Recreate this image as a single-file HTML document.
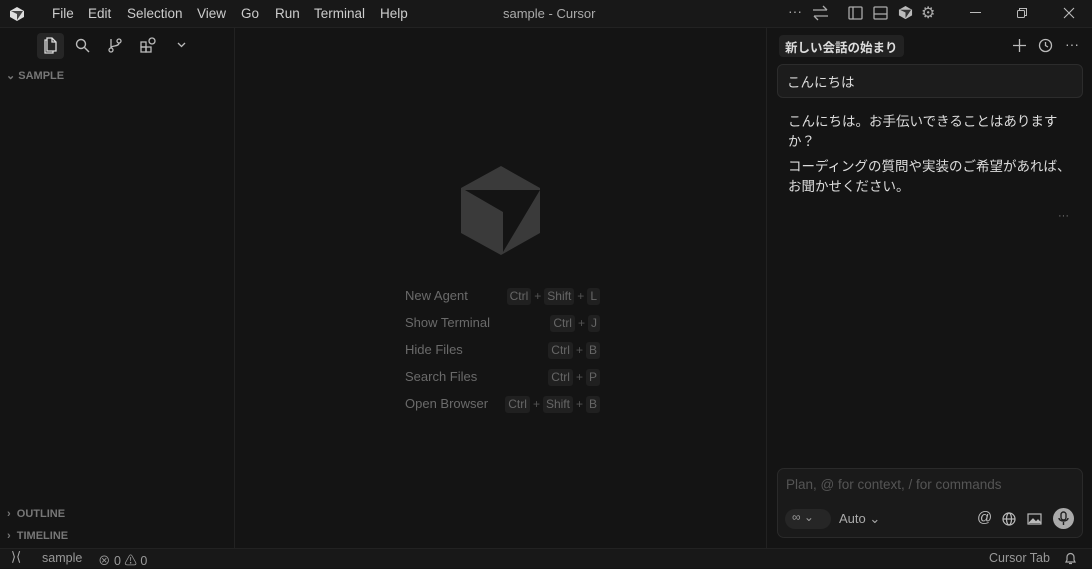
<!DOCTYPE html>
<html><head><meta charset="utf-8"><style>
*{margin:0;padding:0;box-sizing:border-box}
body{width:1092px;height:568px;background:#141414;font-family:"Liberation Sans","Noto Sans CJK JP",sans-serif;color:#ccc;position:relative;overflow:hidden;font-size:13px}
.a{position:absolute;white-space:nowrap}
.kb{display:inline-block;background:#202020;border-radius:3px;padding:1px 3px;font-size:12px;color:#666;line-height:15px}
.row{position:absolute;left:405px;width:195px;height:20px;color:#6a6a6a;font-size:13px}
.row .k{position:absolute;right:0;top:0;color:#555;font-size:12px}
.row .k span.p{margin:0 3px}
svg{position:absolute}
</style></head><body>
<div class="a" style="left:0;top:0;width:1092px;height:28px;background:#181818;border-bottom:1px solid #222"></div>
<svg style="left:9px;top:6px" width="16" height="16" viewBox="0 0 16 16"><path d="M8 1L15 5V11L8 15L1 11V5Z" fill="#ddd"/><path d="M2 5H14L8 14V8Z" fill="#444"/></svg>
<div class="a" style="top:6px;left:52px;font-size:13.5px">File</div>
<div class="a" style="top:6px;left:88px;font-size:13.5px">Edit</div>
<div class="a" style="top:6px;left:127px;font-size:13.5px">Selection</div>
<div class="a" style="top:6px;left:197px;font-size:13.5px">View</div>
<div class="a" style="top:6px;left:241px;font-size:13.5px">Go</div>
<div class="a" style="top:6px;left:275px;font-size:13.5px">Run</div>
<div class="a" style="top:6px;left:314px;font-size:13.5px">Terminal</div>
<div class="a" style="top:6px;left:380px;font-size:13.5px">Help</div>
<div class="a" style="top:6px;left:503px;font-size:13px;color:#aaa">sample - Cursor</div>
<div class="a" style="top:3px;left:788px;font-size:14px;color:#aaa">···</div>
<svg style="left:812px;top:5px" width="17" height="16" viewBox="0 0 17 16" fill="none" stroke="#aaa" stroke-width="1.3"><path d="M1 5H15M11 1L15 5M16 11H2M6 15L2 11"/></svg>
<svg style="left:848px;top:6px" width="15" height="14" fill="none" stroke="#aaa" stroke-width="1.3"><rect x="1" y="1" width="13" height="12" rx="1"/><path d="M5 1V13"/></svg>
<svg style="left:873px;top:6px" width="15" height="14" fill="none" stroke="#aaa" stroke-width="1.3"><rect x="1" y="1" width="13" height="12" rx="1"/><path d="M1 8H14"/></svg>
<svg style="left:898px;top:5px" width="15" height="15" viewBox="0 0 16 16"><path d="M8 1L15 5V11L8 15L1 11V5Z" fill="#bbb"/><path d="M2 5H14L8 14V8Z" fill="#333"/></svg>
<div class="a" style="top:3px;left:921px;font-size:16px;color:#aaa">⚙</div>
<div class="a" style="top:12px;left:970px;width:11px;height:1px;background:#bbb"></div>
<svg style="left:1016px;top:7px" width="12" height="12" fill="none" stroke="#bbb"><rect x="1.5" y="3.5" width="7" height="7" rx="1"/><path d="M3.5 3.5V1.5H10.5V8.5H8.5"/></svg>
<svg style="left:1063px;top:7px" width="12" height="12" stroke="#bbb" stroke-width="1.1"><path d="M1 1L11 11M11 1L1 11"/></svg>
<div class="a" style="left:234px;top:28px;width:1px;height:520px;background:#222"></div>
<div class="a" style="left:37px;top:33px;width:27px;height:26px;background:#262626;border-radius:4px"></div>
<svg style="left:42px;top:37px" width="16" height="18" fill="none" stroke="#ddd" stroke-width="1.3"><path d="M5 3H3V16H11V14"/><path d="M5 1H10L14 5V14H5Z"/><path d="M10 1V5H14"/></svg>
<svg style="left:75px;top:38px" width="15" height="15" fill="none" stroke="#bbb" stroke-width="1.4"><circle cx="6" cy="6" r="4.5"/><path d="M9.5 9.5L14 14"/></svg>
<svg style="left:107px;top:37px" width="17" height="17" fill="none" stroke="#bbb" stroke-width="1.3"><circle cx="4" cy="13" r="2"/><circle cx="12" cy="4" r="2"/><path d="M4 11V2M12 6C12 10 4 8 4 11"/></svg>
<svg style="left:140px;top:37px" width="17" height="17" fill="none" stroke="#bbb" stroke-width="1.3"><rect x="1" y="5" width="5" height="5"/><rect x="1" y="10" width="5" height="5"/><rect x="6" y="10" width="5" height="5"/><circle cx="12" cy="4" r="3"/></svg>
<svg style="left:177px;top:42px" width="9" height="6" fill="none" stroke="#bbb" stroke-width="1.3"><path d="M1 1L4.5 4.5L8 1"/></svg>
<div class="a" style="left:6px;top:69px;font-size:11px;font-weight:bold;color:#777">⌄&nbsp;SAMPLE</div>
<div class="a" style="left:7px;top:508px;font-size:11px;font-weight:bold;color:#777">›&nbsp; OUTLINE</div>
<div class="a" style="left:7px;top:530px;font-size:11px;font-weight:bold;color:#777">›&nbsp; TIMELINE</div>
<svg style="left:461px;top:166px" width="80" height="90" viewBox="461 166 80 90"><path d="M501 166L540 188V233L501 255L461 233V188Z" fill="#3a3a3a"/><path d="M465 190H540L503 252V212Z" fill="#141414"/></svg>
<div class="row" style="top:288px">New Agent<div class="k"><span class="kb">Ctrl</span><span class="p">+</span><span class="kb">Shift</span><span class="p">+</span><span class="kb">L</span></div></div>
<div class="row" style="top:315px">Show Terminal<div class="k"><span class="kb">Ctrl</span><span class="p">+</span><span class="kb">J</span></div></div>
<div class="row" style="top:342px">Hide Files<div class="k"><span class="kb">Ctrl</span><span class="p">+</span><span class="kb">B</span></div></div>
<div class="row" style="top:369px">Search Files<div class="k"><span class="kb">Ctrl</span><span class="p">+</span><span class="kb">P</span></div></div>
<div class="row" style="top:396px">Open Browser<div class="k"><span class="kb">Ctrl</span><span class="p">+</span><span class="kb">Shift</span><span class="p">+</span><span class="kb">B</span></div></div>
<div class="a" style="left:766px;top:28px;width:1px;height:520px;background:#222"></div>
<div class="a" style="left:779px;top:35px;height:22px;padding:2px 6px;background:#222;border-radius:4px;font-size:12.5px;font-weight:bold;color:#ddd">新しい会話の始まり</div>
<svg style="left:1013px;top:39px" width="13" height="13" stroke="#bbb" stroke-width="1.3"><path d="M6.5 0V13M0 6.5H13"/></svg>
<svg style="left:1038px;top:38px" width="15" height="15" fill="none" stroke="#bbb" stroke-width="1.3"><circle cx="7.5" cy="7.5" r="6"/><path d="M7.5 4V7.5L10 9"/></svg>
<div class="a" style="left:1065px;top:36px;font-size:14px;color:#bbb">···</div>
<div class="a" style="left:777px;top:64px;width:306px;height:34px;background:#1c1c1c;border:1px solid #2c2c2c;border-radius:6px;padding:6px 9px;font-size:13.5px;color:#ddd">こんにちは</div>
<div class="a" style="left:788px;top:112px;font-size:13.5px;color:#ddd;line-height:20px;white-space:normal;width:280px">こんにちは。お手伝いできることはありますか？</div>
<div class="a" style="left:788px;top:157px;font-size:13.5px;color:#ddd;line-height:20px;white-space:normal;width:285px">コーディングの質問や実装のご希望があれば、お聞かせください。</div>
<div class="a" style="left:1058px;top:210px;font-size:11px;color:#777">···</div>
<div class="a" style="left:777px;top:468px;width:306px;height:70px;background:#1a1a1a;border:1px solid #2a2a2a;border-radius:7px"></div>
<div class="a" style="left:786px;top:477px;font-size:13.5px;color:#555">Plan, @ for context, / for commands</div>
<div class="a" style="left:785px;top:509px;width:46px;height:20px;background:#262626;border-radius:10px;font-size:12px;color:#999;padding:1px 7px">∞ ⌄</div>
<div class="a" style="left:839px;top:511px;font-size:13px;color:#aaa">Auto ⌄</div>
<div class="a" style="left:977px;top:509px;font-size:15px;color:#bbb">@</div>
<svg style="left:1002px;top:512px" width="14" height="14" fill="none" stroke="#bbb" stroke-width="1.2"><circle cx="7" cy="7" r="6"/><ellipse cx="7" cy="7" rx="2.5" ry="6"/><path d="M1 7H13"/></svg>
<svg style="left:1027px;top:513px" width="15" height="12" fill="none" stroke="#bbb" stroke-width="1.2"><rect x="1" y="1" width="13" height="10"/><path d="M2 10L6 6L9 9L11 7L14 10" fill="#bbb"/></svg>
<div class="a" style="left:1053px;top:508px;width:21px;height:21px;border-radius:50%;background:#aaa"></div>
<svg style="left:1058px;top:511px" width="11" height="15" fill="none" stroke="#222" stroke-width="1.4"><rect x="3" y="1" width="5" height="8" rx="2.5"/><path d="M1 7C1 11 10 11 10 7M5.5 11V14"/></svg>
<div class="a" style="left:0;top:548px;width:1092px;height:20px;background:#181818;border-top:1px solid #222"></div>
<div class="a" style="left:11px;top:549px;font-size:13px;color:#aaa">⟩⟨</div>
<div class="a" style="left:42px;top:551px;font-size:12.5px;color:#999">sample</div>
<div class="a" style="left:98px;top:550px;font-size:12.5px;color:#999">⊗ 0 ⚠ 0</div>
<div class="a" style="left:989px;top:551px;font-size:12.5px;color:#999">Cursor Tab</div>
<svg style="left:1064px;top:551px" width="13" height="14" fill="none" stroke="#aaa" stroke-width="1.2"><path d="M2 11H11L10 9V6A3.5 3.5 0 0 0 3 6V9Z"/><path d="M5 12.5H8"/></svg>
</body></html>
